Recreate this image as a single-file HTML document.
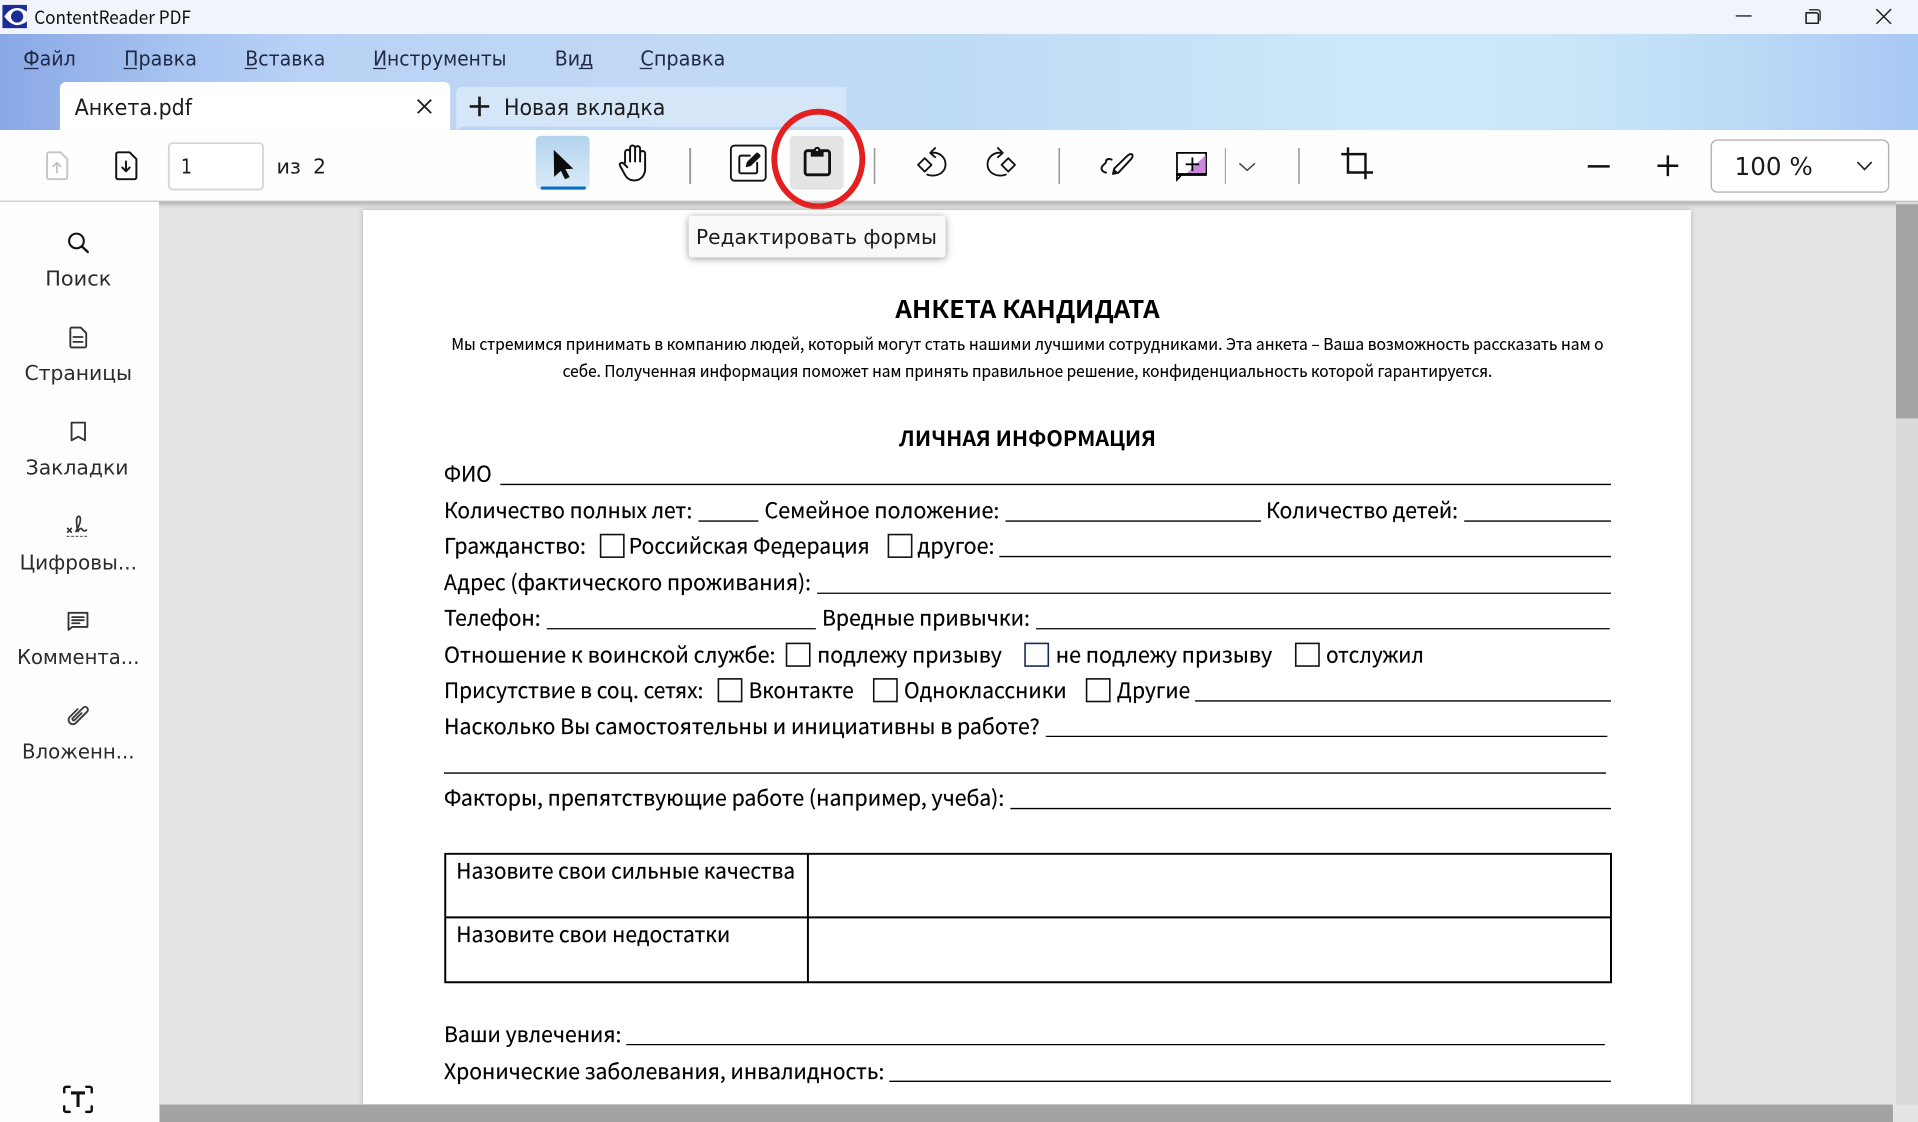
<!DOCTYPE html>
<html lang="ru"><head><meta charset="utf-8"><title>ContentReader PDF</title>
<style>
html,body{margin:0;padding:0;width:1918px;height:1122px;overflow:hidden;background:#e4e4e4}
svg{display:block}
.u{font-family:"DejaVu Sans","Liberation Sans",sans-serif;fill:#1c1c1c}
.d{font-family:"Noto Sans CJK SC","Liberation Sans",sans-serif;fill:#000;font-size:17.2px;stroke:#000;stroke-width:.15}
.b{font-family:"Noto Sans CJK SC","Liberation Sans",sans-serif;fill:#000;font-weight:700}
.m{font-size:16.5px;fill:#202a44}
.s{font-size:16.5px;fill:#2b2b2b;text-anchor:start}
.ln{stroke:#000;stroke-width:1.1;fill:none}
.cb{stroke:#111;stroke-width:1.3;fill:#fff}
.i{fill:none;stroke:#111;stroke-width:1.6;stroke-linecap:round;stroke-linejoin:round}
.g{fill:none;stroke:#333;stroke-width:1.5;stroke-linecap:round;stroke-linejoin:round}
</style></head><body>
<svg xmlns="http://www.w3.org/2000/svg" width="1918" height="1122" viewBox="0 0 1568 917.25">
<defs>
<linearGradient id="bar" x1="0" x2="1" y1="0" y2="0">
<stop offset="0" stop-color="#8aa8e6"/><stop offset=".1" stop-color="#a9c5f1"/><stop offset=".16" stop-color="#b9d2f5"/><stop offset=".35" stop-color="#c1d9f5"/><stop offset=".5" stop-color="#bfdcf5"/><stop offset=".72" stop-color="#cde8f8"/><stop offset=".82" stop-color="#c9e6f8"/><stop offset=".92" stop-color="#b9d8f5"/><stop offset="1" stop-color="#a8c8f5"/>
</linearGradient>
<linearGradient id="sel" x1="0" x2="0" y1="0" y2="1"><stop offset="0" stop-color="#b3d4ee"/><stop offset="1" stop-color="#dbebf8"/></linearGradient>
<linearGradient id="sh" x1="0" x2="0" y1="0" y2="1"><stop offset="0" stop-color="#b5b5b5"/><stop offset="1" stop-color="#b5b5b5" stop-opacity="0"/></linearGradient>
</defs>

<!-- backgrounds -->
<rect width="1568" height="917.25" fill="#e4e4e4"/>
<rect width="1568" height="28" fill="#f1f4fa"/>
<rect y="27.8" width="1568" height="78.6" fill="url(#bar)"/>
<rect y="106.3" width="1568" height="58" fill="#fefefe"/>
<rect y="164" width="1568" height="1.2" fill="#c4c4c4"/>
<rect y="165" width="130" height="752.25" fill="#fdfdfd"/>
<rect x="130" y="165" width="1438" height="5" fill="url(#sh)"/>

<!-- title bar -->
<rect x="2" y="4" width="20" height="19" fill="#1b2c97"/>
<path d="M3.5 13.5C7 8 11 6.500 14 6.500c3 0 6 1.500 8 3v8c-2 1.500-5 3-8 3-3 0-6.500-1.500-10.500-7z" fill="#fff"/>
<circle cx="14" cy="13.500" r="5" fill="#1b2c97"/>
<text x="28" y="19.500" font-size="15" textLength="128" lengthAdjust="spacingAndGlyphs" style="font-family:'Noto Sans CJK SC','Liberation Sans',sans-serif;fill:#111">ContentReader PDF</text>
<path d="M1419 13h13" stroke="#222" stroke-width="1.100"/>
<path d="M1476.500 10.500h8.500a1.500 1.500 0 0 1 1.500 1.500v7h-10z" fill="none" stroke="#222" stroke-width="1.300" stroke-linejoin="round"/>
<path d="M1479 8h7a2 2 0 0 1 2 2v7" fill="none" stroke="#222" stroke-width="1.100"/>
<path d="M1534 7.500l12 12M1546 7.500l-12 12" stroke="#222" stroke-width="1.200"/>

<!-- menu -->
<g class="u">
<text class="u m" x="19" y="53.500" textLength="43" lengthAdjust="spacingAndGlyphs">Файл</text>
<text class="u m" x="101.500" y="53.500" textLength="59.500" lengthAdjust="spacingAndGlyphs">Правка</text>
<text class="u m" x="200.500" y="53.500" textLength="65.500" lengthAdjust="spacingAndGlyphs">Вставка</text>
<text class="u m" x="305" y="53.500" textLength="109" lengthAdjust="spacingAndGlyphs">Инструменты</text>
<text class="u m" x="453.500" y="53.500" textLength="31.500" lengthAdjust="spacingAndGlyphs">Вид</text>
<text class="u m" x="523.500" y="53.500" textLength="69.500" lengthAdjust="spacingAndGlyphs">Справка</text>
</g>
<path d="M19.500 56h12M101 56h11M200 56h10M305 56h10.500M473 56h11.500M523 56h10" stroke="#202a44" stroke-width="1"/>

<!-- tabs -->
<path d="M49 106.400V72a5 5 0 0 1 5-5H363a5 5 0 0 1 5 5v34.400z" fill="#fff"/>
<text class="u" x="61" y="94" font-size="18" textLength="96" lengthAdjust="spacingAndGlyphs">Анкета.pdf</text>
<path d="M341.500 81.500l11 11M352.500 81.500l-11 11" stroke="#222" stroke-width="1.500"/>
<path d="M373 106.400V75a4 4 0 0 1 4-4H692V103.500H378z" fill="#d6e6f9"/>
<path d="M392 79v16M384 87h16" stroke="#1c1c1c" stroke-width="2.200"/>
<text class="u" x="412" y="94" font-size="18" textLength="132" lengthAdjust="spacingAndGlyphs">Новая вкладка</text>

<!-- toolbar left -->
<g fill="none" stroke="#c4c4c4" stroke-width="1.500" stroke-linejoin="round" stroke-linecap="round">
<path d="M40 124.500h9.500l5.500 5.500v15a1.500 1.500 0 0 1-1.500 1.500h-13.500a1.500 1.500 0 0 1-1.500-1.500v-19a1.500 1.500 0 0 1 1.500-1.500z"/>
<path d="M46.500 141v-8M43.500 136l3-3 3 3"/>
</g>
<g fill="none" stroke="#111" stroke-width="1.600" stroke-linejoin="round" stroke-linecap="round">
<path d="M96.500 124.500h9.500l5.500 5.500v15a1.500 1.500 0 0 1-1.500 1.500h-13.500a1.500 1.500 0 0 1-1.500-1.500v-19a1.500 1.500 0 0 1 1.500-1.500z"/>
<path d="M103 132v8M100 137l3 3 3-3"/>
</g>
<rect x="138" y="117" width="77" height="38" rx="3" fill="#fff" stroke="#d6d6d6" stroke-width="1.500"/>
<text class="u" x="148" y="142" font-size="17" textLength="9" lengthAdjust="spacingAndGlyphs">1</text>
<text class="u" x="226" y="142" font-size="17" textLength="20" lengthAdjust="spacingAndGlyphs">из</text>
<text class="u" x="256" y="142" font-size="17" textLength="10.500" lengthAdjust="spacingAndGlyphs">2</text>

<!-- selected tool -->
<rect x="438" y="111" width="44" height="44" rx="4" fill="url(#sel)"/>
<rect x="442" y="152.500" width="37" height="2.500" rx="1" fill="#0a70c6"/>
<path d="M452.700 122.500L468.700 138l-6.500.300 3.500 6.500-3.800 1.700-3.300-6.800-5.600 4.800z" fill="#0c0c0c"/>

<!-- hand -->
<path class="i" d="M511 133V124.500a2.050 2.050 0 0 1 4.100 0M515.100 132V121a2.050 2.050 0 0 1 4.100 0V132M519.200 121.500a2.050 2.050 0 0 1 4.100 0V132M523.300 125.500a2.050 2.050 0 0 1 4.100 0V138c0 5.500-3.500 9.500-9 9.500-4.500 0-6.500-2.500-8-5.500l-3.500-6.500c-1-2 1.500-3.200 3-1.800l2.900 3"/>

<rect x="563.400" y="121" width="1.600" height="29.500" fill="#9a9a9a"/>

<!-- edit -->
<rect x="597.500" y="119" width="28.500" height="28.700" rx="3" fill="none" stroke="#111" stroke-width="1.500"/>
<path class="i" d="M613 127.200h-7.300a1.300 1.300 0 0 0-1.300 1.300v11.900a1.300 1.300 0 0 0 1.300 1.300h12a1.300 1.300 0 0 0 1.300-1.300V133"/>
<path d="M610 136.300l.8-3.600 7.700-7.500c.8-.8 3.600 1.900 2.800 2.800l-7.700 7.500z" fill="#111" stroke="#111" stroke-width=".6" stroke-linejoin="round"/>

<!-- clipboard -->
<rect x="645.700" y="111" width="44" height="44" rx="4" fill="#e4e4e4"/>
<rect x="658.200" y="123.200" width="20" height="19.700" rx="2" fill="none" stroke="#111" stroke-width="2.300"/>
<path d="M662.800 128v-5.500h2.500c.5-3.300 5-3.300 5.500 0h2.500V128z" fill="#111"/>
<circle cx="668" cy="122.600" r=".9" fill="#e4e4e4"/>

<!-- red circle -->
<ellipse cx="669" cy="130" rx="36" ry="38.700" fill="none" stroke="#e41f1f" stroke-width="4.800"/>

<rect x="714.300" y="121" width="1.300" height="29.500" fill="#9a9a9a"/>

<!-- rotate -->
<g fill="none" stroke="#111" stroke-width="1.500" stroke-linecap="round" stroke-linejoin="round">
<path d="M756 129.300l5.500 5.500-5.500 5.500-5.500-5.500z"/>
<path d="M764.500 121l-4 4 4 3.500M761 125c7-1 12 3.500 12 9.500 0 5.500-5 9.300-11 9-1.500 0-2.800-.200-4-.800"/>
</g>
<g fill="none" stroke="#111" stroke-width="1.500" stroke-linecap="round" stroke-linejoin="round" transform="translate(1580.300 0) scale(-1 1)">
<path d="M756 129.300l5.500 5.500-5.500 5.500-5.500-5.500z"/>
<path d="M764.500 121l-4 4 4 3.500M761 125c7-1 12 3.500 12 9.500 0 5.500-5 9.300-11 9-1.500 0-2.800-.200-4-.800"/>
</g>
<rect x="865.300" y="121" width="1.300" height="29.500" fill="#9a9a9a"/>

<!-- signature -->
<path class="i" d="M921.500 127.500c1.500-1.800 3.800-2 4.300-.800.500 1.200-.2 2.200-1 3.200l-10.500 11.300-4.400 1 1-4.400z" stroke-width="1.700"/>
<path d="M909.800 142.300l.9-4.300 3.500 3.200z" fill="#111"/>
<path class="i" d="M908.800 130.500c-1.800-1-4.600-.600-4.600 1.500 0 2.300-3.700 2.800-3.700 5.600 0 2 2 3.300 3.700 3.500" stroke-width="1.800"/>

<!-- note -->
<path d="M962.200 125h23.800v17.500H966.300l-4.100 4.500z" fill="#fff" stroke="#000" stroke-width="1.400"/>
<path d="M985.700 126.700v15h-15.700z" fill="#c987dd"/>
<rect x="961.500" y="141.500" width="25" height="2.300" fill="#000"/>
<path d="M974.800 128.800v11M969.300 134.300h11" stroke="#000" stroke-width="1.500"/>
<rect x="1001.300" y="121" width="1" height="29.500" fill="#aaa"/>
<path d="M1013.200 133.500l6.400 5.800 6.400-5.800" fill="none" stroke="#444" stroke-width="1.200"/>
<rect x="1061.300" y="121" width="1.300" height="29.500" fill="#9a9a9a"/>

<!-- crop -->
<path d="M1102 120.500V141h20.500M1096.500 126h19.800v20.500" fill="none" stroke="#111" stroke-width="2"/>

<path d="M1298 136h18" stroke="#111" stroke-width="2"/>
<path d="M1363.500 127v17M1355 135.500h17" stroke="#111" stroke-width="2"/>
<rect x="1399" y="114.500" width="145" height="42.500" rx="5" fill="#fff" stroke="#b5b5b5" stroke-width="1.200"/>
<text class="u" x="1418" y="143" font-size="20" textLength="64" lengthAdjust="spacingAndGlyphs">100 %</text>
<path d="M1518.500 132.500l5.800 6 5.800-6" fill="none" stroke="#222" stroke-width="1.400"/>

<!-- scrollbars -->
<rect x="1550" y="165" width="18" height="738" fill="#d9d9d9"/>
<rect x="1550" y="167" width="18" height="175" fill="#a4a4a4"/>
<rect x="130.500" y="903" width="1417" height="14.300" fill="#a3a3a3"/>

<!-- page -->
<rect x="296.800" y="171.700" width="1085.700" height="731" fill="#fff" style="filter:drop-shadow(0 0 2px #aaa)"/>

<!-- sidebar -->
<circle cx="62.500" cy="197" r="6" fill="none" stroke="#111" stroke-width="1.700"/>
<path d="M67 201.500l4.800 4.500" fill="none" stroke="#111" stroke-width="1.900" stroke-linecap="round"/>
<path class="g" d="M58.500 267.800h7.500l4.500 4.500v10.700a1 1 0 0 1-1 1h-11a1 1 0 0 1-1-1v-14.200a1 1 0 0 1 1-1zM60 275.500h7.500M60 279.500h7.500"/>
<path class="g" d="M58.500 345.500h11v14.500l-5.500-3-5.500 3z"/>
<g class="g"><path d="M55.300 432l3 3M58.300 432l-3 3" stroke-width="1.400"/><path d="M62 434.500c2.200-3.300 4.300-8.500 3.600-11.300-.6-2.300-3-1-3 2 0 3.200.5 7.300 1.200 9.300.8-2 2.400-3.500 3.400-1.700.6 1.500 2.200 1.400 3.500.6" stroke-width="1.400"/><path d="M55 438.500h18" stroke-dasharray="1.400 2.200" stroke="#666" stroke-width="1.100"/></g>
<path class="g" d="M56 501h15.500v11.500H59l-3 2.500zM59 504.500h9.500M59 507h9.500M59 509.500h6"/>
<path transform="translate(63.800 584.300) rotate(45)" fill="none" stroke="#3a3a3a" stroke-width="1.500" stroke-linecap="round" d="M-3.500-3V6a3.500 3.500 0 0 0 7 0V-7a2.300 2.300 0 0 0-4.600 0V5a1.100 1.100 0 0 0 2.200 0V-3"/>
<path d="M52.500 893v-3a1.500 1.500 0 0 1 1.500-1.500h3M70.500 888.500h3a1.500 1.500 0 0 1 1.500 1.500v3M75 904.500v3a1.500 1.500 0 0 1-1.500 1.500h-3M57 909h-3a1.500 1.500 0 0 1-1.500-1.500v-3" fill="none" stroke="#111" stroke-width="2" stroke-linecap="round"/>
<path d="M58 893.500h11.500M63.800 893.500V905" fill="none" stroke="#111" stroke-width="2.500"/>

<text class="u s" x="37" y="233.500" textLength="54" lengthAdjust="spacingAndGlyphs">Поиск</text>
<text class="u s" x="20" y="310.500" textLength="88" lengthAdjust="spacingAndGlyphs">Страницы</text>
<text class="u s" x="21" y="388" textLength="84" lengthAdjust="spacingAndGlyphs">Закладки</text>
<text class="u s" x="16" y="465.500" textLength="96" lengthAdjust="spacingAndGlyphs">Цифровы...</text>
<text class="u s" x="14" y="543" textLength="100" lengthAdjust="spacingAndGlyphs">Коммента...</text>
<text class="u s" x="18" y="620" textLength="92" lengthAdjust="spacingAndGlyphs">Вложенн...</text>

<!-- document -->
<text class="b" x="732" y="260" font-size="20" textLength="216" lengthAdjust="spacingAndGlyphs">АНКЕТА КАНДИДАТА</text>
<text class="d" x="369" y="286.300" style="font-size:13.500px;stroke-width:.1" textLength="942" lengthAdjust="spacingAndGlyphs">Мы стремимся принимать в компанию людей, который могут стать нашими лучшими сотрудниками. Эта анкета – Ваша возможность рассказать нам о</text>
<text class="d" x="460" y="308.300" style="font-size:13.500px;stroke-width:.1" textLength="760" lengthAdjust="spacingAndGlyphs">себе. Полученная информация поможет нам принять правильное решение, конфиденциальность которой гарантируется.</text>
<text class="b" x="735" y="364.800" font-size="17" textLength="210" lengthAdjust="spacingAndGlyphs">ЛИЧНАЯ ИНФОРМАЦИЯ</text>

<g transform="translate(0 .5)">
<text class="d" x="363" y="393" textLength="39" lengthAdjust="spacingAndGlyphs">ФИО</text>
<text class="d" x="363" y="423" textLength="203" lengthAdjust="spacingAndGlyphs">Количество полных лет:</text>
<text class="d" x="625" y="423" textLength="192" lengthAdjust="spacingAndGlyphs">Семейное положение:</text>
<text class="d" x="1035" y="423" textLength="157" lengthAdjust="spacingAndGlyphs">Количество детей:</text>
<text class="d" x="363" y="452" textLength="116" lengthAdjust="spacingAndGlyphs">Гражданство:</text>
<text class="d" x="514" y="452" textLength="197" lengthAdjust="spacingAndGlyphs">Российская Федерация</text>
<text class="d" x="750" y="452" textLength="63" lengthAdjust="spacingAndGlyphs">другое:</text>
<text class="d" x="363" y="482" textLength="300" lengthAdjust="spacingAndGlyphs">Адрес (фактического проживания):</text>
<text class="d" x="363" y="511" textLength="79" lengthAdjust="spacingAndGlyphs">Телефон:</text>
<text class="d" x="672" y="511" textLength="170" lengthAdjust="spacingAndGlyphs">Вредные привычки:</text>
<text class="d" x="363" y="541" textLength="271" lengthAdjust="spacingAndGlyphs">Отношение к воинской службе:</text>
<text class="d" x="668" y="541" textLength="151" lengthAdjust="spacingAndGlyphs">подлежу призыву</text>
<text class="d" x="863" y="541" textLength="177" lengthAdjust="spacingAndGlyphs">не подлежу призыву</text>
<text class="d" x="1084" y="541" textLength="80" lengthAdjust="spacingAndGlyphs">отслужил</text>
<text class="d" x="363" y="570" textLength="212" lengthAdjust="spacingAndGlyphs">Присутствие в соц. сетях:</text>
<text class="d" x="612" y="570" textLength="86" lengthAdjust="spacingAndGlyphs">Вконтакте</text>
<text class="d" x="739" y="570" textLength="133" lengthAdjust="spacingAndGlyphs">Одноклассники</text>
<text class="d" x="913" y="570" textLength="60" lengthAdjust="spacingAndGlyphs">Другие</text>
<text class="d" x="363" y="599.500" textLength="487" lengthAdjust="spacingAndGlyphs">Насколько Вы самостоятельны и инициативны в работе?</text>
<text class="d" x="363" y="658" textLength="458" lengthAdjust="spacingAndGlyphs">Факторы, препятствующие работе (например, учеба):</text>
<text class="d" x="373" y="717.500" textLength="277" lengthAdjust="spacingAndGlyphs">Назовите свои сильные качества</text>
<text class="d" x="373" y="769.500" textLength="224" lengthAdjust="spacingAndGlyphs">Назовите свои недостатки</text>
<text class="d" x="363" y="851.500" textLength="145" lengthAdjust="spacingAndGlyphs">Ваши увлечения:</text>
<text class="d" x="363" y="881.500" textLength="360" lengthAdjust="spacingAndGlyphs">Хронические заболевания, инвалидность:</text>
<path class="ln" d="M409 395.500h908M571 425.500h49M822 425.500h209M1197 425.500h120M817 454.500h500M668 484.500h649M447 513.500h220M847 513.500h469M977 572.500h340M855 601.500h459M363 631.500h950M826 660.500h491M512 853.500h800M727 883.500h590"/>
</g>

<rect class="cb" x="491" y="437" width="19" height="18.500"/>
<rect class="cb" x="726.300" y="437" width="19" height="18.500"/>
<rect class="cb" x="643" y="526" width="19" height="18.500"/>
<rect class="cb" x="838" y="526" width="19" height="18.500" style="stroke:#1a2a5a"/>
<rect class="cb" x="1059.300" y="526" width="19" height="18.500"/>
<rect class="cb" x="587.300" y="555" width="19" height="18.500"/>
<rect class="cb" x="714.300" y="555" width="19" height="18.500"/>
<rect class="cb" x="888.300" y="555" width="19" height="18.500"/>

<path d="M364 698h953v105H364zM660.500 698v105M364 750h953" fill="none" stroke="#000" stroke-width="1.600"/>

<!-- tooltip -->
<rect x="563" y="176.500" width="210" height="34" rx="3" fill="#f9f9f9" style="filter:drop-shadow(0 1px 3px #999)"/>
<text class="u" x="569" y="199.300" font-size="17" textLength="197" lengthAdjust="spacingAndGlyphs">Редактировать формы</text>
</svg>
</body></html>
